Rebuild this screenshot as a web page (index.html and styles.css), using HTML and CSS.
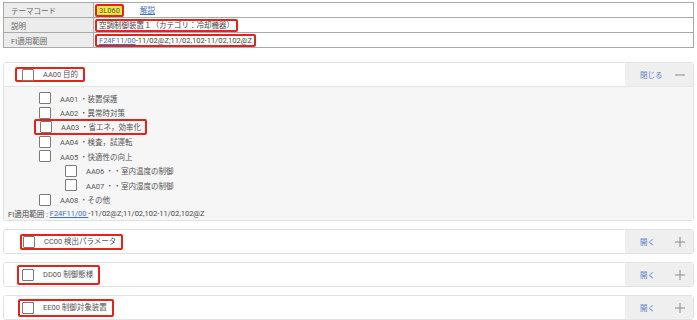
FILE: index.html
```html
<!doctype html>
<html>
<head>
  <meta charset="utf-8">
  <title>テーマ詳細</title>
  <link rel="stylesheet" href="styles.css">
</head>
<body>
  <table class="info">
    <tr>
      <th>テーマコード</th>
      <td><span class="mark code">3L060</span><a class="link desc" href="#">解説</a></td>
    </tr>
    <tr>
      <th>説明</th>
      <td><span class="mark">空調制御装置１（カテゴリ：冷却機器）</span></td>
    </tr>
    <tr>
      <th>FI適用範囲</th>
      <td><span class="mark"><a class="link" href="#">F24F11/00 </a>-11/02@Z;11/02,102-11/02,102@Z</span></td>
    </tr>
  </table>

  <div class="panels">
    <!-- AA00 (open) -->
    <div class="panel">
      <div class="panel-head open">
        <div class="panel-title"><span class="mark head-mark"><span class="box"></span>AA00 目的</span></div>
        <div class="panel-btn">閉じる
          <svg class="sign" width="10" height="10" viewBox="0 0 10 10"><line x1="0" y1="5" x2="10" y2="5"/></svg>
        </div>
      </div>
      <div class="panel-body">
        <div class="item"><span class="box"></span>AA01 ・装置保護</div>
        <div class="item"><span class="box"></span>AA02 ・異常時対策</div>
        <div class="item"><span class="mark item-mark"><span class="box"></span>AA03 ・省エネ，効率化</span></div>
        <div class="item"><span class="box"></span>AA04 ・検査，試運転</div>
        <div class="item"><span class="box"></span>AA05 ・快適性の向上</div>
        <div class="item sub"><span class="box"></span>AA06 ・・室内温度の制御</div>
        <div class="item sub"><span class="box"></span>AA07 ・・室内湿度の制御</div>
        <div class="item"><span class="box"></span>AA08 ・その他</div>
        <div class="fi">FI適用範囲 : <a class="link" href="#">F24F11/00 </a>-11/02@Z;11/02,102-11/02,102@Z</div>
      </div>
    </div>

    <div class="panel">
      <div class="panel-head">
        <div class="panel-title"><span class="mark head-mark cc"><span class="box"></span>CC00 検出パラメータ</span></div>
        <div class="panel-btn">開く
          <svg class="sign" width="10" height="10" viewBox="0 0 10 10"><line x1="0" y1="5" x2="10" y2="5"/><line x1="5" y1="0" x2="5" y2="10"/></svg>
        </div>
      </div>
    </div>

    <div class="panel">
      <div class="panel-head">
        <div class="panel-title"><span class="mark head-mark dd"><span class="box"></span>DD00 制御態様</span></div>
        <div class="panel-btn">開く
          <svg class="sign" width="10" height="10" viewBox="0 0 10 10"><line x1="0" y1="5" x2="10" y2="5"/><line x1="5" y1="0" x2="5" y2="10"/></svg>
        </div>
      </div>
    </div>

    <div class="panel">
      <div class="panel-head">
        <div class="panel-title"><span class="mark head-mark ee"><span class="box"></span>EE00 制御対象装置</span></div>
        <div class="panel-btn">開く
          <svg class="sign" width="10" height="10" viewBox="0 0 10 10"><line x1="0" y1="5" x2="10" y2="5"/><line x1="5" y1="0" x2="5" y2="10"/></svg>
        </div>
      </div>
    </div>
  </div>
</body>
</html>
```

FILE: styles.css
```css
/* ========== Base ========== */
body {
  margin: 0;
  padding: 2px 3px;
  font-family: Roboto, "Noto Sans CJK JP", sans-serif;
  font-size: 7.5px;
  color: #555;
  background: #fff;
}

.link {
  color: #3d6fc6;
  text-decoration: underline;
}

/* red annotation boxes */
.mark {
  display: inline-flex;
  align-items: center;
  border: 2px solid #e5221c;
  border-radius: 2px;
  padding: 0 2px;
  line-height: 9px;
}

/* ========== Info table ========== */
.info {
  width: 100%;
  border-collapse: collapse;
  border: 1px solid #a9a9a9;
}

.info th,
.info td {
  border: 1px solid #a9a9a9;
  height: 14px;
  padding: 0;
  text-align: left;
  font-weight: normal;
}

.info th {
  width: 82px;
  padding-left: 7px;
  background: #ececec;
  color: #666;
}

.info td {
  padding-left: 1px;
  color: #444;
}

.code {
  background: #f3e93d;
  color: #555;
  padding: 0 2px;
}

.desc {
  margin-left: 16px;
}

/* ========== Panels ========== */
.panels {
  display: flex;
  flex-direction: column;
  gap: 8px;
  margin-top: 14px;
}

.panel {
  border: 1px solid #e2e2e2;
  border-radius: 3px;
  overflow: hidden;
}

.panel-head {
  display: flex;
  height: 23px;
  background: #fff;
}

.panel-head.open {
  border-bottom: 1px solid #e6e6e6;
}

.panel-title {
  flex: 1;
  display: flex;
  align-items: center;
  padding-left: 11px;
}

.head-mark {
  height: 11px;
  padding: 0 5px 0 5px;
}

.head-mark .box {
  margin-right: 9px;
}

.head-mark.cc { margin-left: 5px; padding-left: 1px; height: 12px; }
.head-mark.dd { margin-left: 2px; height: 16px; padding-left: 3px; }
.head-mark.ee { margin-left: 3px; height: 14px; padding-left: 2px; }

.panel-btn {
  width: 68px;
  display: flex;
  align-items: center;
  padding-left: 15px;
  box-sizing: border-box;
  background: #efefef;
  color: #5a80c4;
}

.sign {
  margin-left: auto;
  margin-right: 8px;
  stroke: #888;
  stroke-width: 1;
}

/* ========== Open panel body ========== */
.panel-body {
  background: #f6f6f6;
  padding: 4px 0 1px;
}

.box {
  display: inline-block;
  width: 10px;
  height: 10px;
  border: 1px solid #7a7a7a;
  border-radius: 1px;
  background: #fff;
  flex-shrink: 0;
}

.item {
  display: flex;
  align-items: center;
  height: 14.5px;
  padding-left: 35px;
  color: #555;
}

.item > .box {
  margin-right: 9px;
}

.item.sub {
  padding-left: 61px;
}

.item-mark {
  margin-left: -5px;
  padding: 0 4px;
  height: 12px;
}

.item-mark .box {
  margin-right: 9px;
}

.fi {
  display: flex;
  align-items: center;
  height: 12px;
  padding-left: 4px;
  color: #444;
  white-space: pre;
}
```
